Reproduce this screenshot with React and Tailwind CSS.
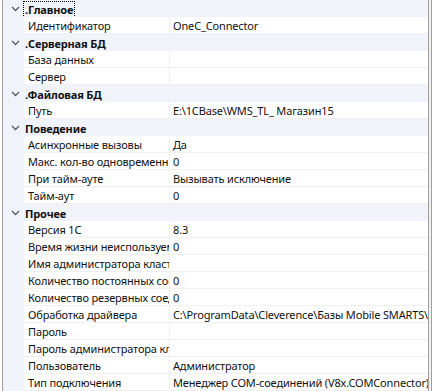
import React from "react";

const Chevron = () => (
  <svg width="9" height="6" viewBox="0 0 9 6" className="block">
    <path d="M1 1 L4.5 4.5 L8 1" fill="none" stroke="#5a5a5a" strokeWidth="1.3" />
  </svg>
);

const data = [
  { cat: ".Главное", focus: true, rows: [["Идентификатор", "OneC_Connector"]] },
  { cat: ".Серверная БД", rows: [["База данных", ""], ["Сервер", ""]] },
  { cat: ".Файловая БД", rows: [["Путь", "E:\\1CBase\\WMS_TL_ Магазин15"]] },
  {
    cat: "Поведение",
    rows: [
      ["Асинхронные вызовы", "Да"],
      ["Макс. кол-во одновременных вызовов", "0"],
      ["При тайм-ауте", "Вызывать исключение"],
      ["Тайм-аут", "0"],
    ],
  },
  {
    cat: "Прочее",
    rows: [
      ["Версия 1С", "8.3"],
      ["Время жизни неиспользуемых соединений", "0"],
      ["Имя администратора кластера", ""],
      ["Количество постоянных соединений", "0"],
      ["Количество резервных соединений", "0"],
      ["Обработка драйвера", "C:\\ProgramData\\Cleverence\\Базы Mobile SMARTS\\Cleverence"],
      ["Пароль", ""],
      ["Пароль администратора кластера", ""],
      ["Пользователь", "Администратор"],
      ["Тип подключения", "Менеджер COM-соединений (V8x.COMConnector)"],
    ],
  },
];

export default function App() {
  return (
    <div
      className="w-[433px] h-[391px] overflow-hidden bg-white flex text-[11px] tracking-[-0.15px] text-[#111]"
      style={{ fontFamily: '"Noto Sans", "Open Sans", sans-serif' }}
    >
      <div className="w-[2px] bg-white" />
      <div className="w-px bg-[#a0a0a0]" />
      <div className="flex-1 flex flex-col min-w-0">
        {data.map((g) => (
          <React.Fragment key={g.cat}>
            <div className="h-[17px] flex bg-[#f0f3f9]">
              <div className="w-[21px] flex items-center justify-center pl-[3px] pt-[1px]">
                <Chevron />
              </div>
              <div className="flex items-center pt-[1px]">
                <span
                  className={
                    "font-bold leading-[15px] px-[1px] " +
                    (g.focus ? "outline outline-1 outline-dotted outline-black" : "")
                  }
                >
                  {g.cat}
                </span>
              </div>
            </div>
            {g.rows.map(([n, v]) => (
              <div key={n} className="h-[17px] flex">
                <div className="w-[21px] bg-[#f0f3f9] shrink-0" />
                <div className="w-[146px] shrink-0 bg-white border-b border-[#f0f0f0] border-r border-r-[#f0f0f0] pl-[4px] pt-[1px] overflow-hidden whitespace-nowrap leading-[15px]">
                  {n}
                </div>
                <div className="flex-1 min-w-0 bg-white border-b border-[#f0f0f0] pl-[3px] pt-[1px] overflow-hidden whitespace-nowrap leading-[15px]">
                  {v}
                </div>
              </div>
            ))}
          </React.Fragment>
        ))}
      </div>
      <div className="w-px bg-[#a0a0a0]" />
      <div className="w-[2px] bg-[#f0f0f0]" />
      <div className="w-px bg-[#a0a0a0]" />
      <div className="w-px bg-white" />
    </div>
  );
}
